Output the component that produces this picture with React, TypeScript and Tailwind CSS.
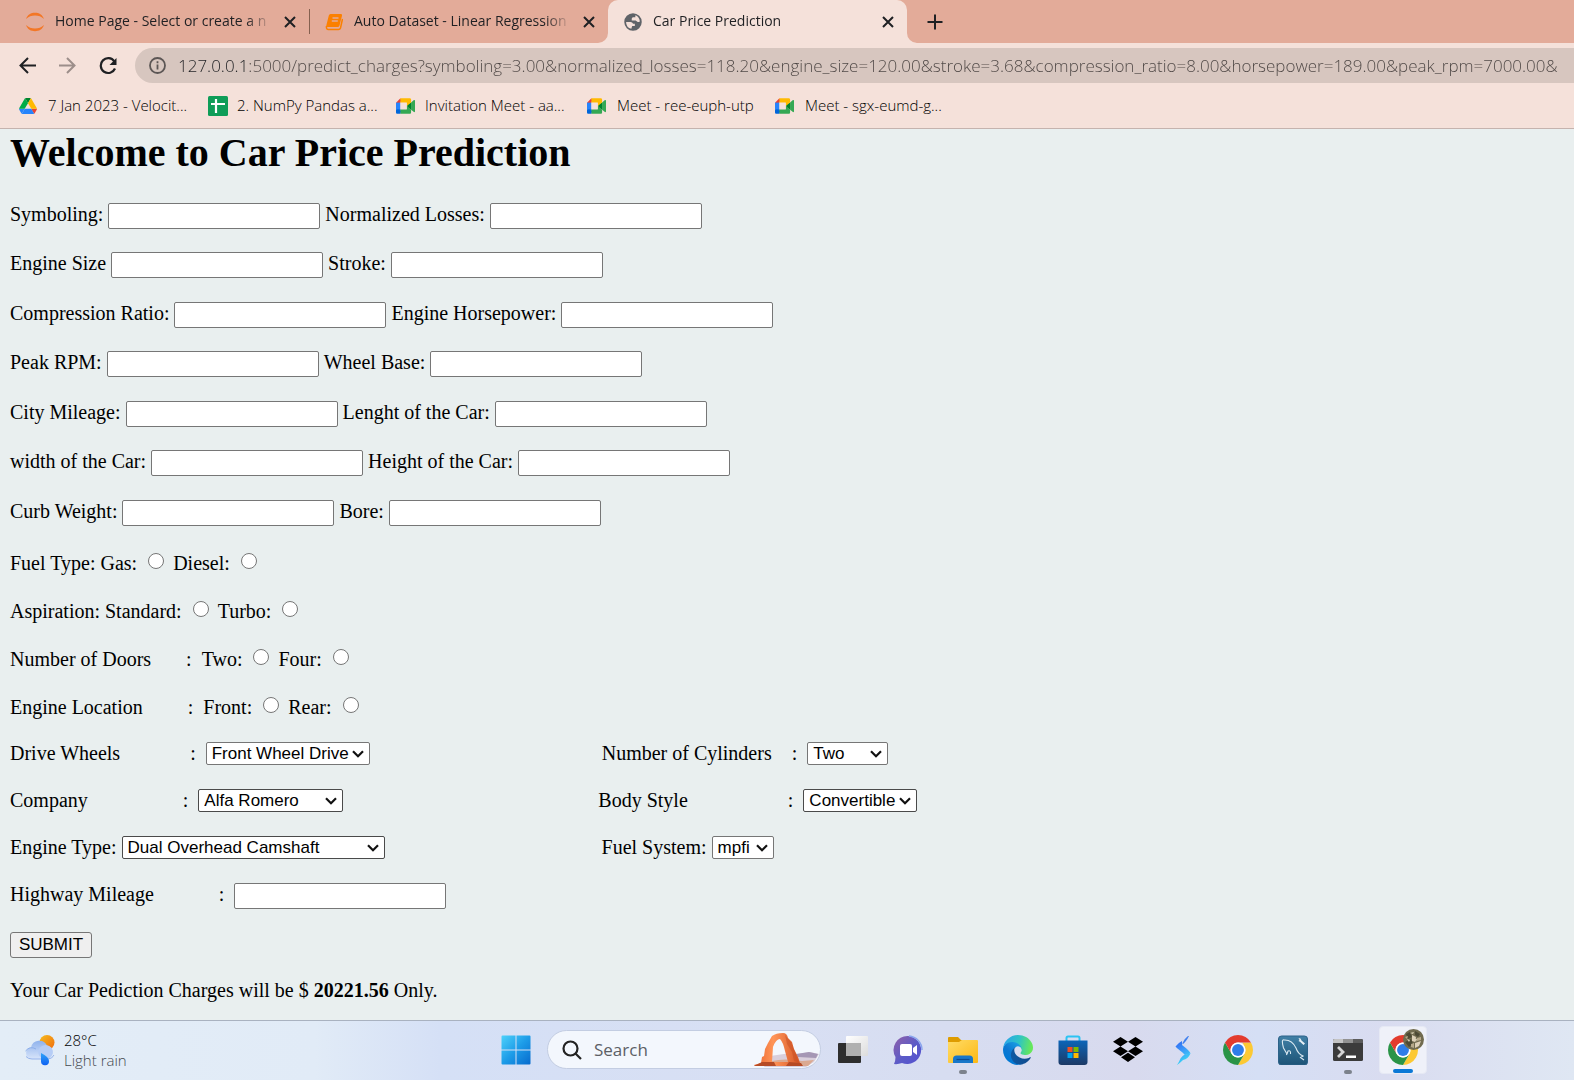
import React from 'react';

const NB = '\u00a0';
const sp = (n: number) => NB.repeat(n);

/* ---------- browser chrome icons ---------- */

function JupyterIcon() {
  return (
    <svg width="20" height="20" viewBox="0 0 20 20" fill="#f37726">
      <path d="M1 7 C2.5 2.6 6 .8 10 .8 S17.500 2.600 19 7 C16.500 4.500 13.500 3.500 10 3.500 S3.500 4.500 1 7z" />
      <path d="M1 13 C2.500 17.400 6 19.200 10 19.200 S17.500 17.400 19 13 C16.500 15.500 13.500 16.500 10 16.500 S3.500 15.500 1 13z" />
    </svg>
  );
}

function BookIcon() {
  return (
    <svg width="18" height="18" viewBox="0 0 18 18">
      <path d="M5.500 1 H16 Q17.500 1 17 2.800 L14.500 12.500 Q14 14 12.500 14 H2.500 Q1 14 1.300 12.500 L3.800 2.500 Q4.200 1 5.500 1z" fill="#fb8000" />
      <path d="M1.500 13 Q1 16.500 3.500 16.500 H13.500 Q15 16.500 15.500 15 L17.500 6" fill="none" stroke="#fb8000" strokeWidth="1.500" />
      <path d="M7.500 5 H13.500 M6.800 8 H12.800" stroke="#e3ab99" strokeWidth="1.300" />
    </svg>
  );
}

function GlobeIcon() {
  return (
    <svg width="20" height="20" viewBox="0 0 24 24" fill="#5f6368">
      <path d="M12 1.500a10.500 10.500 0 1 0 0 21 10.500 10.500 0 0 0 0-21zm-2 18.700a8.400 8.400 0 0 1-6.300-8.200h5.300c1.500 0 2.500.9 3 2.200h2.200v2.600h-3.200zM20.200 11c-.8 1.300-2 1.200-3 .6l-2-1.300h-4.700V8.200c0-1.200 1-2 2.100-2h2.200V3.900c3 .9 5.200 3.700 5.400 7.100z" fillRule="evenodd" />
    </svg>
  );
}

function CloseIcon() {
  return (
    <svg width="12" height="12" viewBox="0 0 12 12" stroke="#1f2023" strokeWidth="2" fill="none">
      <path d="M1 1 L11 11 M11 1 L1 11" />
    </svg>
  );
}

function DriveIcon() {
  return (
    <svg width="18" height="16" viewBox="0 0 87.3 78">
      <path d="m6.600 66.850 3.850 6.650c.8 1.400 1.950 2.500 3.300 3.300l13.750-23.800h-27.500c0 1.550.4 3.100 1.200 4.500z" fill="#2684fc" />
      <path d="m43.650 25-13.750-23.800c-1.350.8-2.500 1.900-3.300 3.300l-25.400 44a9.060 9.060 0 0 0 -1.200 4.500h27.500z" fill="#00ac47" />
      <path d="m73.550 76.800c1.350-.8 2.500-1.900 3.300-3.300l1.600-2.750 7.650-13.250c.8-1.400 1.200-2.950 1.200-4.500h-27.502l5.852 11.500z" fill="#ea4335" />
      <path d="m43.650 25 13.750-23.800c-1.350-.8-2.900-1.200-4.500-1.200h-18.500c-1.600 0-3.150.45-4.500 1.200z" fill="#00832d" />
      <path d="m59.800 53h-32.300l-13.750 23.800c1.350.8 2.900 1.200 4.500 1.200h50.800c1.600 0 3.150-.45 4.500-1.200z" fill="#2684fc" />
      <path d="m73.400 26.500-12.700-22c-.8-1.400-1.950-2.500-3.300-3.300l-13.750 23.800 16.150 28h27.450c0-1.550-.4-3.100-1.200-4.500z" fill="#ffba00" />
    </svg>
  );
}

function SheetIcon() {
  return (
    <svg width="20" height="20" viewBox="0 0 20 20">
      <rect width="20" height="20" rx="1.500" fill="#0f9d58" />
      <path d="M8 3 V17 M3 8 H17" stroke="#fff" strokeWidth="2.200" />
    </svg>
  );
}

function MeetIcon() {
  return (
    <svg width="19" height="16" viewBox="0 0 87.500 72">
      <path fill="#00832d" d="M49.500 36l8.530 9.750 11.470 7.330 2-17.020-2-16.640-11.690 6.440z" />
      <path fill="#0066da" d="M0 51.500V66c0 3.315 2.685 6 6 6h14.500l3-10.960-3-9.540-9.950-3z" />
      <path fill="#e94235" d="M20.500 0L0 20.500l10.550 3 9.950-3 2.950-9.410z" />
      <path fill="#2684fc" d="M20.500 20.500H0v31h20.500z" />
      <path fill="#34a853" d="M82.600 8.680L69.500 19.420v33.660l13.160 10.790c1.970 1.540 4.850.135 4.850-2.370V11c0-2.535-2.945-3.925-4.910-2.320zM49.500 36v15.500h-29V72h43c3.315 0 6-2.685 6-6V53.080z" />
      <path fill="#ffba00" d="M63.500 0h-43v20.500h29V36l20-16.570V6c0-3.315-2.685-6-6-6z" />
      <path fill="#f5e1da" d="M20.500 20.500 H49.500 V51.500 H20.500z" />
    </svg>
  );
}

/* ---------- browser chrome ---------- */

function TabTitle({ children }: { children: React.ReactNode }) {
  return (
    <span className="min-w-0 flex-1 overflow-hidden whitespace-nowrap pb-[2px] text-left [mask-image:linear-gradient(to_right,black_88%,transparent)]">
      {children}
    </span>
  );
}

function TabStrip() {
  return (
    <nav className="flex h-[43px] bg-[#e3ab99] text-[14px] text-[#1f2023]" aria-label="Tabs">
      <div className="flex w-[309px] shrink-0 items-center pl-[25px] pr-[13px]">
        <JupyterIcon />
        <a href="#home" className="ml-[10px] flex min-w-0 flex-1"><TabTitle>Home Page - Select or create a n</TabTitle></a>
        <button type="button" aria-label="Close tab" className="ml-3"><CloseIcon /></button>
      </div>
      <div className="my-[9px] w-px shrink-0 bg-[#85604f]" />
      <div className="flex w-[298px] shrink-0 items-center pl-[15px] pr-[13px]">
        <BookIcon />
        <a href="#dataset" className="ml-[11px] flex min-w-0 flex-1"><TabTitle>Auto Dataset - Linear Regression</TabTitle></a>
        <button type="button" aria-label="Close tab" className="ml-3"><CloseIcon /></button>
      </div>
      <div className="relative flex w-[299px] shrink-0 items-center rounded-t-[10px] bg-[#f5e1da] pl-[15px] pr-[13px]">
        <svg className="absolute bottom-0 -left-[10px]" width="10" height="10" viewBox="0 0 10 10"><path d="M10 0 V10 H0 A10 10 0 0 0 10 0z" fill="#f5e1da" /></svg>
        <svg className="absolute bottom-0 -right-[10px]" width="10" height="10" viewBox="0 0 10 10"><path d="M0 0 V10 H10 A10 10 0 0 1 0 0z" fill="#f5e1da" /></svg>
        <GlobeIcon />
        <a href="#car" className="ml-[10px] flex min-w-0 flex-1"><TabTitle>Car Price Prediction</TabTitle></a>
        <button type="button" aria-label="Close tab"><CloseIcon /></button>
      </div>
      <button type="button" aria-label="New tab" className="ml-5 self-center">
        <svg width="16" height="16" viewBox="0 0 16 16" stroke="#1f2023" strokeWidth="2"><path d="M8 .5 V15.500 M.5 8 H15.500" /></svg>
      </button>
    </nav>
  );
}

const url =
  '127.0.0.1:5000/predict_charges?symboling=3.00&normalized_losses=118.20&engine_size=120.00&stroke=3.68&compression_ratio=8.00&horsepower=189.00&peak_rpm=7000.00&';

function AddressBar() {
  return (
    <div className="flex items-center pl-[19px] pt-[5px]">
      <button type="button" aria-label="Back">
        <svg width="17" height="17" viewBox="0 0 17 17" fill="none" stroke="#1f2023" strokeWidth="2"><path d="M17 8.500 H2 M9 1 L1.500 8.500 L9 16" /></svg>
      </button>
      <button type="button" aria-label="Forward" className="ml-[23px]">
        <svg width="17" height="17" viewBox="0 0 17 17" fill="none" stroke="#9c8e8a" strokeWidth="2"><path d="M0 8.500 H15 M8 1 L15.500 8.500 L8 16" /></svg>
      </button>
      <button type="button" aria-label="Reload" className="ml-[23px]">
        <svg width="18" height="18" viewBox="0 0 18 18"><path d="M15.300 4.400 A7.400 7.400 0 1 0 16 11.500" fill="none" stroke="#1f2023" strokeWidth="2.200" /><path d="M17.500 1 V8 H10.500z" fill="#1f2023" /></svg>
      </button>
      <div className="ml-[18px] flex h-[35px] min-w-0 flex-1 items-center rounded-l-full bg-[#d7c6bf] pl-[14px]">
        <svg width="17" height="17" viewBox="0 0 17 17" className="shrink-0" fill="none" stroke="#5c5655" strokeWidth="1.800"><circle cx="8.500" cy="8.500" r="7.500" /><path d="M8.500 7.500 V12.500 M8.500 4.300 V6.200" /></svg>
        <input
          aria-label="Address"
          type="text"
          defaultValue={url}
          className="ml-[12px] min-w-0 flex-1 bg-[linear-gradient(to_right,#1f2023_67px,#4d4644_67px)] bg-clip-text text-[17px] font-light text-[#4d4644] outline-none [-webkit-text-fill-color:transparent]"
        />
      </div>
    </div>
  );
}

function Bookmarks() {
  const items = [
    { icon: <DriveIcon />, text: '7 Jan 2023 - Velocit...', box: 'w-[189px]', gap: 'gap-[11px]' },
    { icon: <SheetIcon />, text: '2. NumPy Pandas a...', box: 'w-[188px]', gap: 'gap-[9px]' },
    { icon: <MeetIcon />, text: 'Invitation Meet - aa...', box: 'w-[191px]', gap: 'gap-[10px]' },
    { icon: <MeetIcon />, text: 'Meet - ree-euph-utp', box: 'w-[188px]', gap: 'gap-[11px]' },
    { icon: <MeetIcon />, text: 'Meet - sgx-eumd-g...', box: 'w-[188px]', gap: 'gap-[11px]' },
  ];
  return (
    <div className="flex h-[46px] items-center border-b border-[#c5b3ae] pl-[19px] text-[15px] font-light text-black">
      {items.map((b) => (
        <a key={b.text} href="#bookmark" className={`flex shrink-0 items-center whitespace-nowrap ${b.box} ${b.gap}`}>
          {b.icon}
          {b.text}
        </a>
      ))}
    </div>
  );
}

/* ---------- form ---------- */

function Field({ label, name }: { label: string; name: string }) {
  return (
    <div className="flex gap-[5px]">
      <label htmlFor={name} className="whitespace-pre">{label}</label>
      <input id={name} name={name} type="text" className="h-[26px] w-[212px] rounded-[2px] border border-[#767676] bg-white px-[3px] font-['Liberation_Sans',Arial,sans-serif] text-[17px]" />
    </div>
  );
}

function Picker({ label, name, width, options, dark }: { label: string; name: string; width: string; options: string[]; dark?: boolean }) {
  return (
    <div className="flex gap-[5px]">
      <label htmlFor={name} className="whitespace-pre">{label}</label>
      <div className={`relative h-[23px] ${width}`}>
        <select
          id={name}
          name={name}
          className={`block h-full w-full appearance-none rounded-[2px] border bg-white pl-[5px] font-['Liberation_Sans',Arial,sans-serif] text-[17px] leading-[21px] text-black ${dark ? 'border-[#4a4a4a]' : 'border-[#767676]'}`}
        >
          {options.map((o) => <option key={o}>{o}</option>)}
        </select>
        <svg className="pointer-events-none absolute right-[6px] top-[8px]" width="12" height="8" viewBox="0 0 12 8" fill="none" stroke="#111" strokeWidth="2.200"><path d="M1 1.200 L6 6.200 L11 1.200" /></svg>
      </div>
    </div>
  );
}

function Radios({ title, name, options }: { title: string; name: string; options: string[] }) {
  return (
    <div role="radiogroup" aria-label={title.trim()} className="flex h-6 gap-[5px]">
      <span className="whitespace-pre">{title}</span>
      <div className="flex gap-[9px]">
        {options.map((o) => (
          <label key={o} className="flex gap-[11px]">
            {o}:
            <input type="radio" name={name} value={o} className="mt-px h-4 w-4 appearance-none rounded-full border border-[#767676] bg-white checked:border-[5px]" />
          </label>
        ))}
      </div>
    </div>
  );
}

const fieldRows: [string, string][] = [
  ['Symboling:', 'Normalized Losses:'],
  ['Engine Size', 'Stroke:'],
  ['Compression Ratio:', 'Engine Horsepower:'],
  ['Peak RPM:', 'Wheel Base:'],
  ['City Mileage:', 'Lenght of the Car:'],
  ['width of the Car:', 'Height of the Car:'],
  ['Curb Weight:', 'Bore:'],
];

function PredictionPage() {
  return (
    <main className="flex-1 bg-[#e9efef] pl-[10px] pt-[2px] font-['Liberation_Serif','Times_New_Roman',serif] text-[20px] leading-[22px] text-black">
      <h1 className="text-[40px] font-bold leading-[44px]">Welcome to Car Price Prediction</h1>
      <form className="mt-7" onSubmit={(e) => e.preventDefault()}>
        <div className="grid [grid-auto-rows:49px_50px]">
          {fieldRows.map(([a, b]) => (
            <div key={a} className="flex items-start gap-[5px]">
              <Field label={a} name={a} />
              <Field label={b} name={b} />
            </div>
          ))}
        </div>
        <div className="mt-[3px] flex flex-col gap-6">
          <Radios title="Fuel Type:" name="fuel" options={['Gas', 'Diesel']} />
          <Radios title="Aspiration:" name="aspiration" options={['Standard', 'Turbo']} />
          <Radios title={`Number of Doors${sp(7)}:${NB}`} name="doors" options={['Two', 'Four']} />
          <Radios title={`Engine Location${sp(9)}:${NB}`} name="location" options={['Front', 'Rear']} />
        </div>
        <div className="mt-[22px] flex flex-col gap-[21px]">
          <div className="flex h-[26px] gap-[232px]">
            <Picker label={`Drive Wheels${sp(14)}:${NB}`} name="drive" width="w-[164px]" options={['Front Wheel Drive', 'Rear Wheel Drive']} />
            <Picker label={`Number of Cylinders${sp(4)}:${NB}`} name="cylinders" width="w-[81px]" options={['Two', 'Four', 'Six']} />
          </div>
          <div className="flex h-[26px] gap-[255px]">
            <Picker label={`Company${sp(19)}:${NB}`} name="company" width="w-[145px]" options={['Alfa Romero', 'Audi', 'BMW']} dark />
            <Picker label={`Body Style${sp(20)}:${NB}`} name="body" width="w-[114px]" options={['Convertible', 'Sedan']} dark />
          </div>
          <div className="flex h-[26px] gap-[217px]">
            <Picker label="Engine Type:" name="engine" width="w-[263px]" options={['Dual Overhead Camshaft', 'Overhead Camshaft']} dark />
            <Picker label="Fuel System:" name="system" width="w-[62px]" options={['mpfi', 'idi']} />
          </div>
          <Field label={`Highway Mileage${sp(13)}:${NB}`} name="highway" />
        </div>
        <button type="submit" className="mt-[23px] block h-[26px] w-[82px] rounded-[3px] border border-[#767676] bg-[#efefef] font-['Liberation_Sans',Arial,sans-serif] text-[17px]">SUBMIT</button>
      </form>
      <p className="mt-[21px]">Your Car Pediction Charges will be $ <b>20221.56</b> Only.</p>
    </main>
  );
}

/* ---------- taskbar icons ---------- */

function WeatherIcon() {
  return (
    <svg width="32" height="32" viewBox="0 0 32 32">
      <defs>
        <linearGradient id="sun" x1="0" y1="0" x2="1" y2="1"><stop offset="0" stopColor="#f5bd20" /><stop offset="1" stopColor="#f06a0c" /></linearGradient>
        <linearGradient id="cloud" x1="0" y1="0" x2="0" y2="1"><stop offset="0" stopColor="#8fb2ec" /><stop offset="1" stopColor="#d7e4fa" /></linearGradient>
        <linearGradient id="drop" x1="0" y1="0" x2="0" y2="1"><stop offset="0" stopColor="#2fa2f8" /><stop offset="1" stopColor="#0f62f2" /></linearGradient>
      </defs>
      <circle cx="23" cy="8.500" r="7.500" fill="url(#sun)" />
      <path d="M7 25 a6 6 0 0 1-1-11.500 h1 a8.500 8.500 0 0 1 16-2 a7 7 0 0 1 1 13.500z" fill="url(#cloud)" />
      <path d="M18 24.500 a7.200 7.200 0 1 1 7 0z" fill="#b6cdf6" />
      <path d="M1.500 17 Q6 11.500 12 15" fill="none" stroke="#8caeea" strokeWidth="1" />
      <path d="M2 22.500 Q4 25 8 25 H24 Q28 25 30 21" fill="none" stroke="#95b3ec" strokeWidth="1" />
      <path d="M17 19 Q25 23 25 27 a4 4 0 0 1-8 .5z" fill="url(#drop)" />
    </svg>
  );
}

function WindowsIcon() {
  return (
    <svg width="30" height="30" viewBox="0 0 30 30">
      <defs><linearGradient id="win" gradientUnits="userSpaceOnUse" x1="0" y1="0" x2="30" y2="30"><stop offset="0" stopColor="#4fd3fb" /><stop offset=".5" stopColor="#1d9ce8" /><stop offset="1" stopColor="#0669cc" /></linearGradient></defs>
      <path d="M.5 1.500 q0-1 1-1 H14.500 V14.500 H.5z M15.500 .5 H28.500 q1 0 1 1 V14.500 H15.500z M.5 15.500 H14.500 V29.500 H1.500 q-1 0-1-1z M15.500 15.500 H29.500 V28.500 q0 1-1 1 H15.500z" fill="url(#win)" />
    </svg>
  );
}

function ArchArt() {
  return (
    <svg width="66" height="36" viewBox="0 0 66 36">
      <defs><linearGradient id="arch" x1="0" y1="0" x2="1" y2="0"><stop offset="0" stopColor="#e8622c" /><stop offset=".4" stopColor="#ff9558" /><stop offset="1" stopColor="#d35325" /></linearGradient></defs>
      <path d="M16 24 L30 22 L44 22 L56 20 L65 22 L60 30 L52 35 H10z" fill="#d9cfdc" />
      <path d="M42 22 L55 20 L64 22 L62 26 L44 25z" fill="#a597b5" />
      <path d="M18 29 Q30 26 48 29 L60 28 L54 34 H15z" fill="#dba990" />
      <path d="M0 33 L7 31 L8 25 L10 24 L11 17 L14 11 L18 4 Q22 1 29 1 Q33 1 34 6 L38 10 L40 17 L44 25 L46 31 L48 34 H1z M18 30 L19 15 Q22 7 26 7 Q29 10 31 19 L34 30z" fill="url(#arch)" fillRule="evenodd" />
      <path d="M31 3 L33 12 L38 20 L40 29 L45 31 L41 20 L37 10z" fill="#c44c22" opacity=".45" />
      <path d="M0 34 L8 30 H20 L22 34z M32 34 L35 30 L47 31 L49 34z" fill="#b64b25" />
    </svg>
  );
}

function TaskViewIcon() {
  return (
    <svg width="30" height="30" viewBox="0 0 30 30">
      <defs><linearGradient id="tv" x1="0" y1="0" x2="1" y2="1"><stop offset="0" stopColor="#fff" /><stop offset="1" stopColor="#dcdcdc" /></linearGradient></defs>
      <rect x="0" y="8" width="23" height="20" rx="1" fill="#2e2e2e" />
      <rect x="8" y="1" width="22" height="20" rx="1" fill="url(#tv)" />
      <rect x="8" y="8" width="15" height="13" fill="#b0b0b0" />
    </svg>
  );
}

function ChatIcon() {
  return (
    <svg width="30" height="30" viewBox="0 0 30 30">
      <defs><linearGradient id="chat" x1="0" y1="0" x2="1" y2="1"><stop offset="0" stopColor="#9160a8" /><stop offset=".55" stopColor="#5b5bc8" /><stop offset="1" stopColor="#5350d0" /></linearGradient></defs>
      <path d="M15 1 A14 14 0 1 1 9 28 Q5 29.500 1 29 Q2.500 26 2.500 22 A14 14 0 0 1 15 1z" fill="url(#chat)" />
      <path d="M16 1 A14 14 0 0 1 29 15" fill="none" stroke="#8aa5ee" strokeWidth="1.500" />
      <rect x="7" y="9" width="12" height="12" rx="2" fill="#fff" />
      <path d="M20 13 L24 10 V20 L20 17z" fill="#fff" />
    </svg>
  );
}

function FolderIcon() {
  return (
    <svg width="30" height="30" viewBox="0 0 30 30">
      <defs><linearGradient id="fold" x1="0" y1="0" x2="1" y2="1"><stop offset="0" stopColor="#ffdc67" /><stop offset="1" stopColor="#fcb813" /></linearGradient></defs>
      <path d="M0 3 q0-1 1-1 H10 L13 5 H29 V12 H0z" fill="#de9c00" />
      <path d="M0 7 H11 L14 5 H29 q1 0 1 1 V27 q0 1-1 1 H1 q-1 0-1-1z" fill="url(#fold)" />
      <path d="M5 28 V24 q0-3.500 3.500-3.500 H21.500 q3.500 0 3.500 3.500 V28z" fill="#1877c9" />
      <path d="M8.500 24.500 H21.500" stroke="#0b4c93" strokeWidth="1.200" />
    </svg>
  );
}

function EdgeIcon() {
  return (
    <svg width="30" height="30" viewBox="0 0 256 256">
      <defs>
        <linearGradient id="e1" gradientUnits="userSpaceOnUse" x1="63" y1="177" x2="241" y2="177"><stop offset="0" stopColor="#0c59a4" /><stop offset="1" stopColor="#114a8b" /></linearGradient>
        <linearGradient id="e2" gradientUnits="userSpaceOnUse" x1="157" y1="100" x2="46" y2="220"><stop offset="0" stopColor="#1b9de2" /><stop offset=".6" stopColor="#0c77d2" /><stop offset="1" stopColor="#0078d4" /></linearGradient>
        <linearGradient id="e3" gradientUnits="userSpaceOnUse" x1="20" y1="60" x2="240" y2="110"><stop offset="0" stopColor="#2aa8e6" /><stop offset=".5" stopColor="#2fc4c4" /><stop offset="1" stopColor="#66e85a" /></linearGradient>
      </defs>
      <path d="M231 190.500c-3.400 1.800-6.900 3.400-10.500 4.700a101.700 101.700 0 0 1-35.900 6.500c-47.300 0-88.500-32.500-88.500-74.300 0-11.900 6.600-22.300 16.200-27.900-42.800 1.800-53.800 46.400-53.800 72.500 0 73.900 68.100 81.400 82.800 81.400 7.900 0 19.800-2.300 27-4.600l1.300-.4a128.300 128.300 0 0 0 66.600-52.800c3.500-5.400-2.400-7-5.200-5.100z" fill="url(#e1)" />
      <path d="M105.700 241.400a79.200 79.200 0 0 1-22.700-21.300 80.700 80.700 0 0 1 29.500-120.600c3.200-1.500 8.500-4.100 15.600-4a32.400 32.400 0 0 1 25.700 13 31.900 31.900 0 0 1 6.300 18.700c0-.2 24.500-79.600-80-79.600-43.900 0-80 41.700-80 78.200a130.200 130.200 0 0 0 12.100 56 128 128 0 0 0 156.400 67 75.500 75.500 0 0 1-62.800-7.900z" fill="url(#e2)" />
      <path d="M152.300 148.900c-.8 1-3.300 2.500-3.300 5.700 0 2.600 1.700 5.100 4.700 7.200 14.400 10 41.500 8.700 41.600 8.700a59.600 59.600 0 0 0 30.300-8.300 61.400 61.400 0 0 0 30.400-52.900c.3-22.400-8-37.300-11.300-43.900C223.500 23.900 177.700 0 128 0A128 128 0 0 0 0 126.200c.5-36.500 36.800-66 80-66 3.500 0 23.500.3 42 10 16.300 8.600 24.900 19 30.800 29.200 6.200 10.700 7.300 24.100 7.300 29.500s-2.700 13.300-7.800 20z" fill="url(#e3)" />
    </svg>
  );
}

function StoreIcon() {
  return (
    <svg width="30" height="30" viewBox="0 0 30 30">
      <defs><linearGradient id="store" x1="0" y1="0" x2="0" y2="1"><stop offset="0" stopColor="#0c65b8" /><stop offset="1" stopColor="#1d3a66" /></linearGradient></defs>
      <path d="M8.500 6 V3 q0-1.500 1.500-1.500 H20 q1.500 0 1.500 1.500 V6" fill="none" stroke="#2cc3f3" strokeWidth="2" />
      <path d="M.5 5.500 H29.500 V27 q0 3-3 3 H3.500 q-3 0-3-3z" fill="url(#store)" />
      <rect x="9.500" y="12" width="5" height="5" fill="#f25022" /><rect x="15.500" y="12" width="5" height="5" fill="#7fba00" />
      <rect x="9.500" y="18" width="5" height="5" fill="#00a4ef" /><rect x="15.500" y="18" width="5" height="5" fill="#ffb900" />
    </svg>
  );
}

function DropboxIcon() {
  return (
    <svg width="30" height="30" viewBox="0 0 30 30">
      <path d="M7.500 2 L15 6.700 L7.500 11.400 L0 6.700z M22.500 2 L30 6.700 L22.500 11.400 L15 6.700z M7.500 11.500 L15 16.200 L7.500 20.900 L0 16.200z M22.500 11.500 L30 16.200 L22.500 20.900 L15 16.200z M15 17.800 L22 22.200 L15 27 L8 22.200z" fill="#000" />
    </svg>
  );
}

function BoltIcon() {
  return (
    <svg width="30" height="30" viewBox="0 0 30 30">
      <defs><linearGradient id="bolt" gradientUnits="userSpaceOnUse" x1="8" y1="4" x2="22" y2="26"><stop offset="0" stopColor="#2b5cf0" /><stop offset=".5" stopColor="#3d9bfa" /><stop offset="1" stopColor="#3be0f4" /></linearGradient></defs>
      <path d="M20 1 Q17 3 14.500 8 L14.500 9.500 Q18 7 21 1z" fill="#3f80ee" />
      <path d="M14 6 Q10 8 7.500 11.500 Q8 12.500 14.500 17.500 L17 20 L22.500 18.500 Q22 16 14 10z" fill="url(#bolt)" />
      <path d="M22.500 18.500 Q20 24 15 25 Q12 28 9 30 Q11 27 12.500 23.500 Q15 20 17 19.500z" fill="url(#bolt)" />
    </svg>
  );
}

function ChromeIcon() {
  return (
    <svg width="30" height="30" viewBox="0 0 48 48">
      <path d="M44.780 12 A24 24 0 0 1 24 48 L34.390 30 A12 12 0 0 0 34.390 18 L31 12z" fill="#fcc934" />
      <path d="M3.220 12 L13.610 30 A12 12 0 0 0 34.390 30 L24 48 A24 24 0 0 1 3.220 12z" fill="#2a9447" />
      <path d="M3.220 12 A24 24 0 0 1 44.780 12 H24 A12 12 0 0 0 13.610 30z" fill="#e33b2e" />
      <circle cx="24" cy="24" r="12" fill="#fff" />
      <circle cx="24" cy="24" r="9.500" fill="#2f7de9" />
    </svg>
  );
}

function DolphinIcon() {
  return (
    <svg width="30" height="30" viewBox="0 0 30 30">
      <defs><linearGradient id="sql" x1="0" y1="0" x2="0" y2="1"><stop offset="0" stopColor="#4180a6" /><stop offset="1" stopColor="#1d5477" /></linearGradient></defs>
      <rect x=".5" y="1" width="29" height="29" rx="3" fill="url(#sql)" stroke="#2c6289" />
      <path d="M9 19 L5.500 13 Q3 4 6 5 Q14 4.500 18 13 Q20 19 25 21 L22.500 22.500 L26 25 M9 19 L10 16 Q13 15 12.500 19 M9 18 L8.500 20" fill="none" stroke="#dbe9f1" strokeWidth="1.100" />
      <path d="M20.500 3 L22.500 3.500 L23.500 5.500 L27 8.500 L25.500 10 L22 6.800 L20.500 6 L21.500 5z" fill="#e6eff4" />
    </svg>
  );
}

function TerminalIcon() {
  return (
    <svg width="30" height="30" viewBox="0 0 30 30">
      <rect x="0" y="4" width="30" height="22" rx="1.500" fill="#3b3b3b" />
      <path d="M0 8 V5.500 q0-1.500 1.500-1.500 H10 V8z" fill="#c4c4c4" />
      <path d="M10 4 H20 V8 H10z" fill="#929292" />
      <path d="M20 4 H28.500 q1.500 0 1.500 1.500 V8 H20z" fill="#5c5c5c" />
      <path d="M5 12 L10 17 L5 22" fill="none" stroke="#d5d5d5" strokeWidth="2.800" />
      <rect x="13" y="20.500" width="10" height="2.500" fill="#fff" />
    </svg>
  );
}

function ProfileBadge() {
  return (
    <svg className="absolute right-[2px] top-[2px]" width="21" height="21" viewBox="0 0 21 21">
      <circle cx="10.500" cy="10.500" r="10.500" fill="#716b4f" />
      <path d="M3 5 L7 3 L9 8 L5 10z M12 2 L17 5 L15 8 L12 6z M2 13 L8 10 L10 15 L6 18z" fill="#4d4a35" />
      <path d="M9 6 L13 8 L12 13 L9 12z M12 14 L18 12 L16 17 L12 19z M4 10 L7 11 L6 13z" fill="#ddd0b8" />
      <path d="M14 9 L18 8 L18 11 L14 12z M8 15 L11 14 L11 19 L8 18z M2 8 L5 7 L4 10z" fill="#b7a98a" />
      <path d="M7 4 L11 3 L10 5z M10 9 L14 10 L13 13z" fill="#d9d0b6" />
    </svg>
  );
}

/* ---------- taskbar ---------- */

function TaskButton({ label, mark, children }: { label: string; mark?: boolean; children: React.ReactNode }) {
  return (
    <button type="button" aria-label={label} className="relative flex h-full w-[55px] items-center justify-center">
      {children}
      {mark && <span className="absolute bottom-1 h-1 w-2 rounded-full bg-[#7c828c]" />}
    </button>
  );
}

function Taskbar() {
  return (
    <footer className="flex h-[60px] items-center overflow-hidden border-t border-[#a9b2c0] bg-[linear-gradient(to_right,#e3edf7_0%,#e1ebf7_20%,#d5e0f6_28%,#d8dff3_50%,#d7ddf1_60%,#d8daee_72%,#d5dff5_80%,#d9dcf0_88%,#dfe7f3_100%)] pb-[2px]">
      <div className="flex w-[488px] shrink-0 items-center gap-2 pl-[24px]">
        <WeatherIcon />
        <div className="text-[15px] font-light leading-5">
          <p className="text-black">28°C</p>
          <p className="text-[#45494f]">Light rain</p>
        </div>
      </div>
      <div className="flex h-full shrink-0 items-center">
        <TaskButton label="Start"><WindowsIcon /></TaskButton>
        <label className="mx-1 flex h-[39px] w-[274px] items-center overflow-hidden rounded-full border border-[#c3cde2] bg-[#f3f7fd] pl-[14px]">
          <svg width="20" height="20" viewBox="0 0 20 20" className="shrink-0" fill="none" stroke="#232323" strokeWidth="2.200"><circle cx="8.500" cy="8.500" r="7" /><path d="M13.500 13.500 L19 19" /></svg>
          <input type="text" aria-label="Search" placeholder="Search" className="ml-3 w-[130px] text-[17px] outline-none placeholder:text-[#5c5f66]" />
          <span className="ml-auto"><ArchArt /></span>
        </label>
        <TaskButton label="Task view"><TaskViewIcon /></TaskButton>
        <TaskButton label="Chat"><ChatIcon /></TaskButton>
        <TaskButton label="File Explorer" mark><FolderIcon /></TaskButton>
        <TaskButton label="Edge"><EdgeIcon /></TaskButton>
        <TaskButton label="Store"><StoreIcon /></TaskButton>
        <TaskButton label="Dropbox"><DropboxIcon /></TaskButton>
        <TaskButton label="Quick launch"><BoltIcon /></TaskButton>
        <TaskButton label="Chrome"><ChromeIcon /></TaskButton>
        <TaskButton label="MySQL Workbench"><DolphinIcon /></TaskButton>
        <TaskButton label="Terminal" mark><TerminalIcon /></TaskButton>
        <button type="button" aria-label="Chrome, active" className="relative ml-1 flex h-12 w-12 items-center justify-center rounded-[4px] border border-[#e6e9f4] bg-[#eff1f9]">
          <ChromeIcon />
          <ProfileBadge />
          <span className="absolute bottom-0 h-1 w-5 rounded-full bg-[#0a78d6]" />
        </button>
      </div>
    </footer>
  );
}

export default function App() {
  return (
    <div className="flex min-h-screen flex-col font-['Open_Sans','Segoe_UI',sans-serif]">
      <header className="bg-[#f5e1da]">
        <TabStrip />
        <AddressBar />
        <Bookmarks />
      </header>
      <PredictionPage />
      <Taskbar />
    </div>
  );
}
